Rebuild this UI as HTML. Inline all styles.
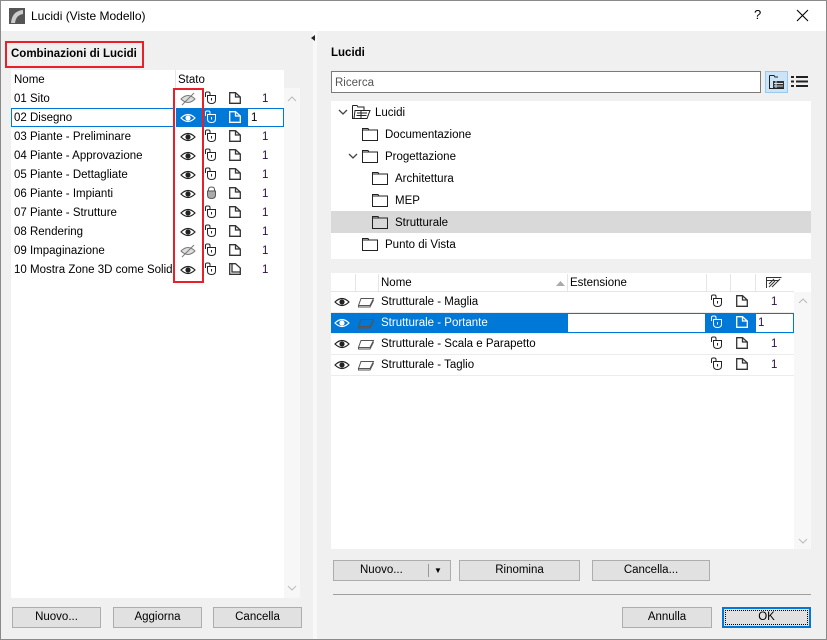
<!DOCTYPE html>
<html><head><meta charset="utf-8">
<style>
*{box-sizing:border-box;margin:0;padding:0}
body{width:827px;height:640px;overflow:hidden;background:#f0f0f0;font-family:"Liberation Sans",sans-serif;font-size:11.5px;color:#000;position:relative}
.a{position:absolute}
.t{position:absolute;white-space:nowrap;line-height:14px}
.btn{position:absolute;height:21px;border:1px solid #adadad;background:#e1e1e1;text-align:center;line-height:19px;font-size:11.5px}
svg{position:absolute;overflow:visible}
.n{color:#2a0f3f}
</style></head><body>
<svg width="0" height="0" style="position:absolute">
<defs>
<g id="eye"><path d="M1 5 Q8 -2 15 5 Q8 12 1 5Z" fill="none" stroke="currentColor" stroke-width="1.2"/><circle cx="8" cy="5" r="2.6" fill="currentColor"/></g>
<g id="eyeoff"><path d="M1 5 Q8 -2 15 5 Q8 12 1 5Z" fill="#ddd" stroke="#777" stroke-width="1"/><path d="M2 11 L14 -1" stroke="#777" stroke-width="1"/></g>
<g id="lock"><path d="M0.5 5 V1.5 Q0.5 0 2 0 H3.5 Q5 0 5 1.5 V3" fill="none" stroke="currentColor"/><path d="M2.5 3.5 H10.5 V8 Q10.5 11.5 6.5 11.5 Q2.5 11.5 2.5 8Z" fill="none" stroke="currentColor"/><path d="M6.5 6 V8.5" stroke="currentColor"/></g>
<g id="lockc"><path d="M3.5 4 V2.5 Q3.5 0 6.5 0 Q9.5 0 9.5 2.5 V4" fill="none" stroke="#555"/><path d="M2.5 4 H10.5 V8 Q10.5 11.5 6.5 11.5 Q2.5 11.5 2.5 8Z" fill="#aaa" stroke="#555"/></g>
<g id="page"><path d="M0.7 0.7 H6.5 L11.3 5 V11.3 H0.7Z M6.5 0.7 V5 H11.3" fill="none" stroke="currentColor" stroke-width="1.3"/></g>
<g id="lay"><path d="M3 1.5 H15.5 L12 8.5 H0.5Z" fill="none" stroke="currentColor"/><path d="M0.5 8.5 V10 H12 L15.5 3" fill="none" stroke="currentColor"/></g>
<g id="fold"><path d="M0.5 1.5 H6 L7 3 H15.5 V13.5 H0.5Z M0.5 3 H7" fill="none" stroke="#222"/></g>
<g id="chev"><path d="M0 0 L4 4 L8 0" fill="none" stroke="#444" stroke-width="1.3"/></g>
</defs></svg>

<div class="a" style="left:0;top:0;width:827px;height:640px;border:1px solid #8a8a8a"></div>
<div class="a" style="left:1px;top:1px;width:825px;height:30px;background:#fff"></div>
<svg style="left:9px;top:8px" width="16" height="16"><rect x="0" y="0" width="16" height="16" fill="#555"/><path d="M2 15 Q3 3 14 2 V6 Q7 7 6 15Z" fill="#ccc"/></svg>
<div class="t" style="left:31px;top:9px;font-size:12px">Lucidi (Viste Modello)</div>
<div class="t" style="left:754px;top:8px;font-size:13px">?</div>
<svg style="left:797px;top:10px" width="11" height="11"><path d="M0 0 L11 11 M11 0 L0 11" stroke="#000" stroke-width="1.1"/></svg>

<div class="a" style="left:313px;top:31px;width:4px;height:608px;background:#f8f8f8"></div>
<svg style="left:311px;top:35px" width="4" height="6"><path d="M4 0 L0 3 L4 6Z" fill="#222"/></svg>

<div class="a" style="left:5px;top:41px;width:139px;height:27px;border:2px solid #e8202a"></div>
<div class="t" style="left:11px;top:47px;font-weight:bold;font-size:11.5px">Combinazioni di Lucidi</div>
<div class="a" style="left:11px;top:70px;width:273px;height:528px;background:#fff"></div>
<div class="a" style="left:284px;top:88px;width:16px;height:510px;background:#f7f7f7"></div>
<div class="a" style="left:175px;top:70px;width:1px;height:18px;background:#e5e5e5"></div>
<div class="t" style="left:14px;top:73px">Nome</div>
<div class="t" style="left:178px;top:73px">Stato</div>
<svg style="left:288px;top:96px" width="8" height="5"><path d="M0 5 L4 1 L8 5" fill="none" stroke="#bbb"/></svg>
<svg style="left:288px;top:586px" width="8" height="5"><path d="M0 0 L4 4 L8 0" fill="none" stroke="#bbb"/></svg>

<div class="a" style="left:11px;top:108px;width:273px;height:19px;border:1px solid #0078d7"></div>
<div class="a" style="left:176px;top:109px;width:72px;height:17px;background:#0078d7"></div>
<div class="a" style="left:248px;top:109px;width:35px;height:17px;background:#fff"></div>

<div class="t" style="left:14px;top:92px">01 Sito</div>
<div class="t" style="left:14px;top:111px">02 Disegno</div>
<div class="t" style="left:14px;top:130px">03 Piante - Preliminare</div>
<div class="t" style="left:14px;top:149px">04 Piante - Approvazione</div>
<div class="t" style="left:14px;top:168px">05 Piante - Dettagliate</div>
<div class="t" style="left:14px;top:187px">06 Piante - Impianti</div>
<div class="t" style="left:14px;top:206px">07 Piante - Strutture</div>
<div class="t" style="left:14px;top:225px">08 Rendering</div>
<div class="t" style="left:14px;top:244px">09 Impaginazione</div>
<div class="t" style="left:14px;top:263px">10 Mostra Zone 3D come Solidi</div>
<div class="a" style="left:174px;top:88px;width:2px;height:195px;background:#fff"></div>

<svg style="left:180px;top:94px;color:#222" width="16" height="10"><use href="#eyeoff"/></svg>
<svg style="left:180px;top:113px;color:#fff" width="16" height="10"><use href="#eye"/></svg>
<svg style="left:180px;top:132px;color:#222" width="16" height="10"><use href="#eye"/></svg>
<svg style="left:180px;top:151px;color:#222" width="16" height="10"><use href="#eye"/></svg>
<svg style="left:180px;top:170px;color:#222" width="16" height="10"><use href="#eye"/></svg>
<svg style="left:180px;top:189px;color:#222" width="16" height="10"><use href="#eye"/></svg>
<svg style="left:180px;top:208px;color:#222" width="16" height="10"><use href="#eye"/></svg>
<svg style="left:180px;top:227px;color:#222" width="16" height="10"><use href="#eye"/></svg>
<svg style="left:180px;top:246px;color:#222" width="16" height="10"><use href="#eyeoff"/></svg>
<svg style="left:180px;top:265px;color:#222" width="16" height="10"><use href="#eye"/></svg>

<svg style="left:205px;top:92px;color:#222" width="12" height="12"><use href="#lock"/></svg>
<svg style="left:205px;top:111px;color:#fff" width="12" height="12"><use href="#lock"/></svg>
<svg style="left:205px;top:130px;color:#222" width="12" height="12"><use href="#lock"/></svg>
<svg style="left:205px;top:149px;color:#222" width="12" height="12"><use href="#lock"/></svg>
<svg style="left:205px;top:168px;color:#222" width="12" height="12"><use href="#lock"/></svg>
<svg style="left:205px;top:187px" width="12" height="12"><use href="#lockc"/></svg>
<svg style="left:205px;top:206px;color:#222" width="12" height="12"><use href="#lock"/></svg>
<svg style="left:205px;top:225px;color:#222" width="12" height="12"><use href="#lock"/></svg>
<svg style="left:205px;top:244px;color:#222" width="12" height="12"><use href="#lock"/></svg>
<svg style="left:205px;top:263px;color:#222" width="12" height="12"><use href="#lock"/></svg>

<svg style="left:229px;top:92px;color:#333" width="12" height="12"><use href="#page"/></svg>
<svg style="left:229px;top:111px;color:#fff" width="12" height="12"><use href="#page"/></svg>
<svg style="left:229px;top:130px;color:#333" width="12" height="12"><use href="#page"/></svg>
<svg style="left:229px;top:149px;color:#333" width="12" height="12"><use href="#page"/></svg>
<svg style="left:229px;top:168px;color:#333" width="12" height="12"><use href="#page"/></svg>
<svg style="left:229px;top:187px;color:#333" width="12" height="12"><use href="#page"/></svg>
<svg style="left:229px;top:206px;color:#333" width="12" height="12"><use href="#page"/></svg>
<svg style="left:229px;top:225px;color:#333" width="12" height="12"><use href="#page"/></svg>
<svg style="left:229px;top:244px;color:#333" width="12" height="12"><use href="#page"/></svg>
<svg style="left:229px;top:263px" width="12" height="12"><path d="M0.7 0.7 H6.5 L11.3 5 V11.3 H0.7Z M3 0.7 V9 H11.3" fill="none" stroke="#333" stroke-width="1.3"/></svg>

<div class="t n" style="left:262px;top:92px">1</div>
<div class="t" style="left:251px;top:111px">1</div>
<div class="t n" style="left:262px;top:130px">1</div>
<div class="t n" style="left:262px;top:149px">1</div>
<div class="t n" style="left:262px;top:168px">1</div>
<div class="t n" style="left:262px;top:187px">1</div>
<div class="t n" style="left:262px;top:206px">1</div>
<div class="t n" style="left:262px;top:225px">1</div>
<div class="t n" style="left:262px;top:244px">1</div>
<div class="t n" style="left:262px;top:263px">1</div>

<div class="a" style="left:173px;top:88px;width:31px;height:195px;border:2px solid #e8202a"></div>

<div class="btn" style="left:12px;top:607px;width:89px">Nuovo...</div>
<div class="btn" style="left:113px;top:607px;width:89px">Aggiorna</div>
<div class="btn" style="left:213px;top:607px;width:89px">Cancella</div>

<div class="t" style="left:331px;top:46px;font-weight:bold">Lucidi</div>
<div class="a" style="left:331px;top:71px;width:430px;height:22px;background:#fff;border:1px solid #7a7a7a"></div>
<div class="t" style="left:335px;top:76px;color:#555">Ricerca</div>
<div class="a" style="left:765px;top:71px;width:23px;height:22px;background:#cce4f7;border:1px solid #99c9ef"></div>
<svg style="left:769px;top:75px" width="16" height="14"><path d="M0.5 0.5 H5 L6 2 H9 M0.5 0.5 V13.5 H15" fill="none" stroke="#222"/><rect x="4" y="6" width="11" height="7" fill="#333"/><path d="M5 8.5 H14 M5 11 H14 M7 6 V13" stroke="#cce4f7"/></svg>
<svg style="left:791px;top:76px" width="17" height="12"><rect x="0" y="0" width="3" height="2" fill="#222"/><rect x="0" y="4.5" width="3" height="2" fill="#222"/><rect x="0" y="9" width="3" height="2" fill="#222"/><rect x="5" y="0" width="12" height="2" fill="#222"/><rect x="5" y="4.5" width="12" height="2" fill="#222"/><rect x="5" y="9" width="12" height="2" fill="#222"/></svg>

<div class="a" style="left:331px;top:101px;width:480px;height:158px;background:#fff"></div>
<div class="a" style="left:331px;top:211px;width:480px;height:22px;background:#d9d9d9"></div>
<svg style="left:339px;top:110px" width="8" height="5"><use href="#chev"/></svg>
<svg style="left:352px;top:104px" width="20" height="16"><path d="M0.5 1.5 H5 L6 3 H12 V6 M0.5 1.5 V14.5 H3" fill="none" stroke="#222"/><path d="M3 6.5 H18 L15 14.5 H2 Z" fill="#fff" stroke="#222"/><path d="M5 9 H15 M4.5 11.5 H14.5 M9 6.5 V14.5" stroke="#222"/></svg>
<div class="t" style="left:375px;top:106px">Lucidi</div>
<svg style="left:362px;top:127px" width="17" height="15"><use href="#fold"/></svg>
<div class="t" style="left:385px;top:128px">Documentazione</div>
<svg style="left:349px;top:154px" width="8" height="5"><use href="#chev"/></svg>
<svg style="left:362px;top:149px" width="17" height="15"><use href="#fold"/></svg>
<div class="t" style="left:385px;top:150px">Progettazione</div>
<svg style="left:372px;top:171px" width="17" height="15"><use href="#fold"/></svg>
<div class="t" style="left:395px;top:172px">Architettura</div>
<svg style="left:372px;top:193px" width="17" height="15"><use href="#fold"/></svg>
<div class="t" style="left:395px;top:194px">MEP</div>
<svg style="left:372px;top:215px" width="17" height="15"><use href="#fold"/></svg>
<div class="t" style="left:395px;top:216px">Strutturale</div>
<svg style="left:362px;top:237px" width="17" height="15"><use href="#fold"/></svg>
<div class="t" style="left:385px;top:238px">Punto di Vista</div>

<div class="a" style="left:331px;top:273px;width:480px;height:276px;background:#fff"></div>
<div class="a" style="left:794px;top:292px;width:17px;height:257px;background:#f7f7f7"></div>
<div class="a" style="left:331px;top:273px;width:463px;height:19px;background:#fff;border-bottom:1px solid #e5e5e5"></div>
<div class="a" style="left:355px;top:274px;width:1px;height:17px;background:#e5e5e5"></div>
<div class="a" style="left:378px;top:274px;width:1px;height:17px;background:#e5e5e5"></div>
<div class="a" style="left:567px;top:274px;width:1px;height:17px;background:#e5e5e5"></div>
<div class="a" style="left:706px;top:274px;width:1px;height:17px;background:#e5e5e5"></div>
<div class="a" style="left:730px;top:274px;width:1px;height:17px;background:#e5e5e5"></div>
<div class="a" style="left:755px;top:274px;width:1px;height:17px;background:#e5e5e5"></div>
<div class="t" style="left:381px;top:276px">Nome</div>
<svg style="left:556px;top:281px" width="9" height="5"><path d="M0 5 L4.5 0 L9 5Z" fill="#aaa"/></svg>
<div class="t" style="left:570px;top:276px">Estensione</div>
<svg style="left:766px;top:277px" width="16" height="11"><path d="M0.5 11 V0.5 H15.5 M0.5 3.5 H13 M3 10 L9 4 M6 10 L12 4 M9 7 L14 2 M3 7 L8 2" fill="none" stroke="#333"/></svg>
<svg style="left:799px;top:298px" width="8" height="5"><path d="M0 5 L4 1 L8 5" fill="none" stroke="#bbb"/></svg>
<svg style="left:799px;top:539px" width="8" height="5"><path d="M0 0 L4 4 L8 0" fill="none" stroke="#bbb"/></svg>

<div class="a" style="left:331px;top:312px;width:463px;height:1px;background:#ececec"></div>
<div class="a" style="left:331px;top:333px;width:463px;height:1px;background:#ececec"></div>
<div class="a" style="left:331px;top:354px;width:463px;height:1px;background:#ececec"></div>
<div class="a" style="left:331px;top:375px;width:463px;height:1px;background:#ececec"></div>
<div class="a" style="left:331px;top:313px;width:463px;height:20px;background:#0078d7"></div>
<div class="a" style="left:568px;top:314px;width:137px;height:18px;background:#fff"></div>
<div class="a" style="left:756px;top:314px;width:37px;height:18px;background:#fff"></div>

<svg style="left:334px;top:297px;color:#222" width="16" height="10"><use href="#eye"/></svg>
<svg style="left:334px;top:318px;color:#fff" width="16" height="10"><use href="#eye"/></svg>
<svg style="left:334px;top:339px;color:#222" width="16" height="10"><use href="#eye"/></svg>
<svg style="left:334px;top:360px;color:#222" width="16" height="10"><use href="#eye"/></svg>
<svg style="left:358px;top:297px;color:#555" width="16" height="11"><use href="#lay"/></svg>
<svg style="left:358px;top:318px;color:#555" width="16" height="11"><use href="#lay"/></svg>
<svg style="left:358px;top:339px;color:#555" width="16" height="11"><use href="#lay"/></svg>
<svg style="left:358px;top:360px;color:#555" width="16" height="11"><use href="#lay"/></svg>
<div class="t" style="left:381px;top:295px">Strutturale - Maglia</div>
<div class="t" style="left:381px;top:316px;color:#fff">Strutturale - Portante</div>
<div class="t" style="left:381px;top:337px">Strutturale - Scala e Parapetto</div>
<div class="t" style="left:381px;top:358px">Strutturale - Taglio</div>
<svg style="left:711px;top:295px;color:#222" width="12" height="12"><use href="#lock"/></svg>
<svg style="left:711px;top:316px;color:#fff" width="12" height="12"><use href="#lock"/></svg>
<svg style="left:711px;top:337px;color:#222" width="12" height="12"><use href="#lock"/></svg>
<svg style="left:711px;top:358px;color:#222" width="12" height="12"><use href="#lock"/></svg>
<svg style="left:736px;top:295px;color:#333" width="12" height="12"><use href="#page"/></svg>
<svg style="left:736px;top:316px;color:#fff" width="12" height="12"><use href="#page"/></svg>
<svg style="left:736px;top:337px;color:#333" width="12" height="12"><use href="#page"/></svg>
<svg style="left:736px;top:358px;color:#333" width="12" height="12"><use href="#page"/></svg>
<div class="t n" style="left:771px;top:295px">1</div>
<div class="t n" style="left:758px;top:316px">1</div>
<div class="t n" style="left:771px;top:337px">1</div>
<div class="t n" style="left:771px;top:358px">1</div>

<div class="btn" style="left:333px;top:560px;width:118px"><span style="position:absolute;left:26px">Nuovo...</span><span style="position:absolute;left:94px;top:3px;width:1px;height:13px;background:#999"></span><span style="position:absolute;left:100px;top:0;font-size:8px">&#9660;</span></div>
<div class="btn" style="left:459px;top:560px;width:121px">Rinomina</div>
<div class="btn" style="left:592px;top:560px;width:118px">Cancella...</div>
<div class="a" style="left:333px;top:594px;width:478px;height:1px;background:#a0a0a0"></div>
<div class="btn" style="left:622px;top:607px;width:90px">Annulla</div>
<div class="btn" style="left:722px;top:607px;width:89px;border:2px solid #0078d7;line-height:17px"><span style="position:absolute;left:1px;top:1px;right:1px;bottom:1px;border:1px dotted #000"></span>OK</div>
</body></html>
